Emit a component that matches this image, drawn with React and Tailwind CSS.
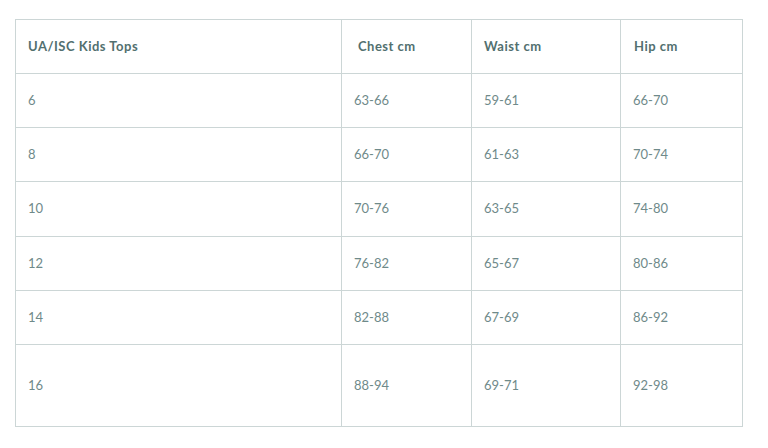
import React from "react";

const rows = [
  ["6", "63-66", "59-61", "66-70"],
  ["8", "66-70", "61-63", "70-74"],
  ["10", "70-76", "63-65", "74-80"],
  ["12", "76-82", "65-67", "80-86"],
  ["14", "82-88", "67-69", "86-92"],
  ["16", "88-94", "69-71", "92-98"],
];

const heights = ["h-[54px]", "h-[54px]", "h-[55px]", "h-[54px]", "h-[54px]", "h-[82px]"];

export default function App() {
  return (
    <div className="w-[768px] h-[448px] bg-white pt-[19px] pl-[15px] font-['Lato','Open_Sans',sans-serif]">
      <table className="border-collapse table-fixed w-[727px] text-[13px]">
        <colgroup>
          <col className="w-[326px]" />
          <col className="w-[130px]" />
          <col className="w-[149px]" />
          <col className="w-[122px]" />
        </colgroup>
        <thead>
          <tr className="h-[54px] text-[#52706f] font-bold tracking-[0.5px]">
            <th className="border border-[#ccd6d6] text-left pl-[12px]">UA/ISC Kids Tops</th>
            <th className="border border-[#ccd6d6] text-left pl-[16px]">Chest cm</th>
            <th className="border border-[#ccd6d6] text-left pl-[12px]">Waist cm</th>
            <th className="border border-[#ccd6d6] text-left pl-[13px]">Hip cm</th>
          </tr>
        </thead>
        <tbody>
          {rows.map((r, i) => (
            <tr key={i} className={heights[i] + " text-[#6f8a8a]"}>
              <td className="border border-[#ccd6d6] pl-[12px]">{r[0]}</td>
              <td className="border border-[#ccd6d6] pl-[12px]">{r[1]}</td>
              <td className="border border-[#ccd6d6] pl-[12px]">{r[2]}</td>
              <td className="border border-[#ccd6d6] pl-[12px]">{r[3]}</td>
            </tr>
          ))}
        </tbody>
      </table>
    </div>
  );
}
